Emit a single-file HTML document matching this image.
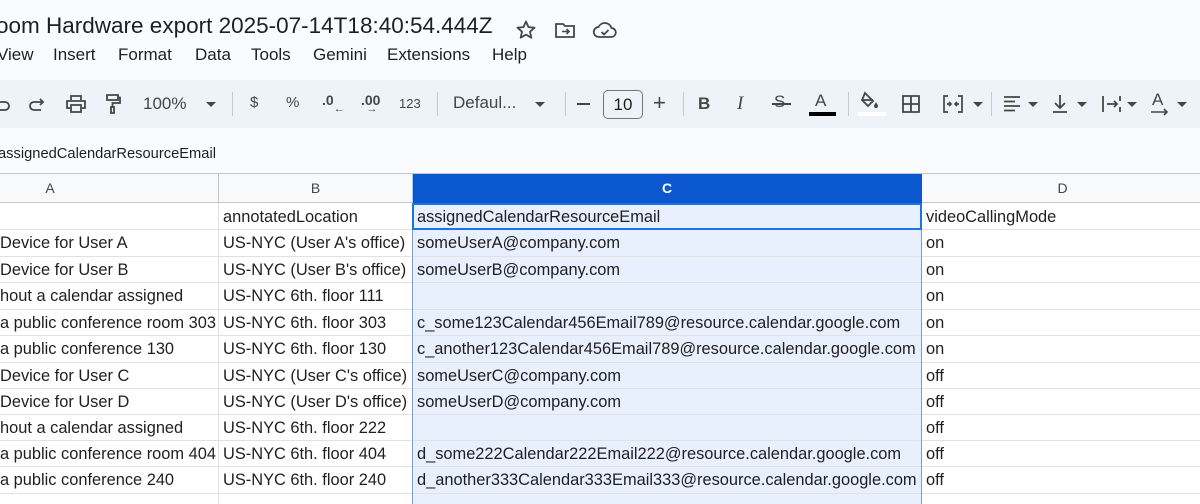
<!DOCTYPE html>
<html><head><meta charset="utf-8"><style>
*{margin:0;padding:0;box-sizing:border-box}
body{width:1200px;height:504px;overflow:hidden;background:#f9fbfd;font-family:"Liberation Sans",Arial,sans-serif;position:relative;color:#1f1f1f}
.a{position:absolute;white-space:nowrap}
.t{font-size:22.5px;top:13px;left:-4px;color:#1f1f1f}
.m{top:45px;font-size:17px;color:#1f1f1f}
.tb{position:absolute;left:-20px;top:80px;width:1240px;height:48px;background:#eef2f9;border-radius:24px}
.ic{position:absolute;top:92px;font-size:17px;color:#444746}
.sep{position:absolute;top:92px;width:1px;height:24px;background:#c7c7c7}
.dd{position:absolute;top:102px;width:0;height:0;border-left:5px solid transparent;border-right:5px solid transparent;border-top:5px solid #444746}
.grid{position:absolute;left:0;top:174px;width:1200px;height:330px;background:#fff}
.h{position:absolute;top:174px;height:29px;border-right:1px solid #c4c7c5;border-bottom:1px solid #c4c7c5;background:#f8f9fa;font-size:14px;color:#444746;text-align:center;line-height:29px}
.c{position:absolute;font-size:16.4px;color:#1f1f1f;height:26px;line-height:29px;padding-left:4px;overflow:hidden}
.hl{position:absolute;left:0;width:1200px;height:1px;background:#e1e1e1}
.vl{position:absolute;top:203px;width:1px;height:301px;background:#e1e1e1}
</style></head><body>
<div class="a t">oom Hardware export 2025-07-14T18:40:54.444Z</div>
<svg class="a" style="left:514px;top:18px" width="24" height="24" viewBox="0 0 24 24"><path d="M12 3.5l2.5 5.6 6 .6-4.5 4 1.3 6-5.3-3.1-5.3 3.1 1.3-6-4.5-4 6-.6z" fill="none" stroke="#444746" stroke-width="1.8" stroke-linejoin="round"/></svg>
<svg class="a" style="left:553px;top:18px" width="24" height="24" viewBox="0 0 24 24"><path d="M3 6h7l2 2h9v11H3z" fill="none" stroke="#444746" stroke-width="1.8"/><path d="M9 13.5h7M13.5 11l2.5 2.5-2.5 2.5" fill="none" stroke="#444746" stroke-width="1.6"/></svg>
<svg class="a" style="left:592px;top:18px" width="26" height="24" viewBox="0 0 26 24"><path d="M7 19a5 5 0 0 1-.5-10A7 7 0 0 1 19.5 10 4.5 4.5 0 0 1 19 19z" fill="none" stroke="#444746" stroke-width="1.8"/><path d="M9.5 14l2.5 2.5 4.5-4.5" fill="none" stroke="#444746" stroke-width="1.8"/></svg>
<div class="a m" style="left:-3px">View</div>
<div class="a m" style="left:53px">Insert</div>
<div class="a m" style="left:118px">Format</div>
<div class="a m" style="left:195px">Data</div>
<div class="a m" style="left:251px">Tools</div>
<div class="a m" style="left:313px">Gemini</div>
<div class="a m" style="left:387px">Extensions</div>
<div class="a m" style="left:492px">Help</div>
<div class="tb"></div>
<svg class="a" style="left:-8px;top:94px" width="20" height="20" viewBox="0 0 20 20"><path d="M4 8h9a4 4 0 0 1 0 8H6" fill="none" stroke="#444746" stroke-width="1.8"/></svg>
<svg class="a" style="left:27px;top:94px" width="20" height="20" viewBox="0 0 20 20"><path d="M16 8H7a4 4 0 0 0 0 8h7M13 5l3 3-3 3" fill="none" stroke="#444746" stroke-width="1.8"/></svg>
<svg class="a" style="left:65px;top:94px" width="22" height="20" viewBox="0 0 22 20"><path d="M6 6V2h10v4M5 14H2V7h18v7h-3M6 11h10v7H6z" fill="none" stroke="#444746" stroke-width="1.8"/></svg>
<svg class="a" style="left:103px;top:93px" width="20" height="22" viewBox="0 0 20 22"><path d="M4 2h11v5H4zM15 4.5h2V10H9.5v4M8 14h3v6H8z" fill="none" stroke="#444746" stroke-width="1.8"/></svg>
<div class="ic" style="left:143px;top:94px">100%</div>
<div class="dd" style="left:206px"></div>
<div class="sep" style="left:232px"></div>
<div class="ic" style="left:250px;top:94px;font-size:15px">$</div>
<div class="ic" style="left:286px;top:94px;font-size:15px">%</div>
<div class="ic" style="left:322px;top:92px;font-size:14px;font-weight:bold">.0<span style="font-size:11px;font-weight:normal;position:relative;top:7px">←</span></div>
<div class="ic" style="left:361px;top:92px;font-size:14px;font-weight:bold">.00<span style="font-size:11px;font-weight:normal;position:relative;top:7px;margin-left:-14px">→</span></div>
<div class="ic" style="left:399px;top:96px;font-size:13px">123</div>
<div class="sep" style="left:437px"></div>
<div class="ic" style="left:453px;top:93px">Defaul...</div>
<div class="dd" style="left:535px"></div>
<div class="sep" style="left:565px"></div>
<div class="a" style="left:577px;top:103px;width:13px;height:2px;background:#444746"></div>
<div class="a" style="left:603px;top:90px;width:40px;height:29px;border:1px solid #747775;border-radius:5px;font-size:17px;line-height:27px;text-align:center;color:#1f1f1f">10</div>
<div class="ic" style="left:653px;top:90px;font-size:22px">+</div>
<div class="sep" style="left:683px"></div>
<div class="ic" style="left:698px;top:94px;font-weight:bold">B</div>
<div class="ic" style="left:737px;top:93px;font-style:italic;font-family:'Liberation Serif',serif;font-size:19px">I</div>
<div class="ic" style="left:774px;top:92px">S</div>
<div class="a" style="left:772px;top:103px;width:19px;height:2px;background:#444746"></div>
<div class="ic" style="left:815px;top:91px">A</div>
<div class="a" style="left:809px;top:112px;width:27px;height:4px;background:#000"></div>
<div class="sep" style="left:848px"></div>
<svg class="a" style="left:859px;top:90px" width="24" height="22" viewBox="0 0 24 22"><path d="M6 3l8 8-5 5-6-6z M3 10h11" fill="none" stroke="#444746" stroke-width="1.8"/><path d="M17 12c1 2 2 3 2 4a2 2 0 0 1-4 0c0-1 1-2 2-4z" fill="#444746"/></svg>
<div class="a" style="left:858px;top:112px;width:28px;height:4px;background:#fff"></div>
<svg class="a" style="left:901px;top:94px" width="20" height="20" viewBox="0 0 20 20"><path d="M2 2h16v16H2zM10 2v16M2 10h16" fill="none" stroke="#444746" stroke-width="1.8"/></svg>
<svg class="a" style="left:942px;top:94px" width="22" height="20" viewBox="0 0 22 20"><path d="M6 2H2v16h4M16 2h4v16h-4M5 10h4M7 8l2 2-2 2M17 10h-4M15 8l-2 2 2 2" fill="none" stroke="#444746" stroke-width="1.7"/></svg>
<div class="dd" style="left:973px"></div>
<div class="sep" style="left:991px"></div>
<svg class="a" style="left:1002px;top:95px" width="20" height="18" viewBox="0 0 20 18"><path d="M2 2h16M2 6.5h11M2 11h16M2 15.5h11" stroke="#444746" stroke-width="1.8"/></svg>
<div class="dd" style="left:1028px"></div>
<svg class="a" style="left:1050px;top:93px" width="20" height="22" viewBox="0 0 20 22"><path d="M10 2v13M5 10l5 5 5-5M3 19h14" fill="none" stroke="#444746" stroke-width="1.8"/></svg>
<div class="dd" style="left:1077px"></div>
<svg class="a" style="left:1100px;top:94px" width="22" height="20" viewBox="0 0 22 20"><path d="M3 2v16M7 10h10M14 7l3 3-3 3M20 2v5M20 13v5" fill="none" stroke="#444746" stroke-width="1.8"/></svg>
<div class="dd" style="left:1127px"></div>
<div class="ic" style="left:1152px;top:90px">A</div>
<svg class="a" style="left:1150px;top:108px" width="20" height="8" viewBox="0 0 20 8"><path d="M1 4h16M14 1l3 3-3 3" fill="none" stroke="#444746" stroke-width="1.6"/></svg>
<div class="dd" style="left:1177px"></div>
<div class="a" style="left:-2px;top:146px;font-size:14.7px;color:#1f1f1f">assignedCalendarResourceEmail</div>
<div class="grid"></div>
<div class="a" style="left:0;top:173px;width:1200px;height:1px;background:#c4c7c5"></div>
<div class="h" style="left:-118px;width:337px">A</div>
<div class="h" style="left:219px;width:194px">B</div>
<div class="h" style="left:413px;width:509px;background:#0b57d0;color:#fff;font-weight:bold;border-color:#0b57d0">C</div>
<div class="h" style="left:922px;width:282px">D</div>
<div class="a" style="left:413px;top:203px;width:509px;height:301px;background:#e8effd"></div>
<div class="hl" style="top:229px"></div><div class="hl" style="top:256px"></div><div class="hl" style="top:282px"></div><div class="hl" style="top:309px"></div><div class="hl" style="top:335px"></div><div class="hl" style="top:362px"></div><div class="hl" style="top:388px"></div><div class="hl" style="top:414px"></div><div class="hl" style="top:440px"></div><div class="hl" style="top:466px"></div><div class="hl" style="top:493px"></div>
<div class="vl" style="left:218px"></div>
<div class="a" style="left:412px;top:203px;width:1px;height:301px;background:#6d9eeb"></div>
<div class="a" style="left:921px;top:203px;width:1px;height:301px;background:#6d9eeb"></div>
<div class="a" style="left:412px;top:203px;width:510px;height:27px;border:2px solid #1a73e8"></div>

<div class="c" style="left:219px;top:203px">annotatedLocation</div>
<div class="c" style="left:413px;top:203px">assignedCalendarResourceEmail</div>
<div class="c" style="left:922px;top:203px">videoCallingMode</div>

<div class="c" style="left:-4px;top:229px">Device for User A</div><div class="c" style="left:219px;top:229px">US-NYC (User A's office)</div><div class="c" style="left:413px;top:229px">someUserA@company.com</div><div class="c" style="left:922px;top:229px">on</div>
<div class="c" style="left:-4px;top:256px">Device for User B</div><div class="c" style="left:219px;top:256px">US-NYC (User B's office)</div><div class="c" style="left:413px;top:256px">someUserB@company.com</div><div class="c" style="left:922px;top:256px">on</div>
<div class="c" style="left:-4px;top:282px">hout a calendar assigned</div><div class="c" style="left:219px;top:282px">US-NYC 6th. floor 111</div><div class="c" style="left:922px;top:282px">on</div>
<div class="c" style="left:-4px;top:309px">a public conference room 303</div><div class="c" style="left:219px;top:309px">US-NYC 6th. floor 303</div><div class="c" style="left:413px;top:309px">c_some123Calendar456Email789@resource.calendar.google.com</div><div class="c" style="left:922px;top:309px">on</div>
<div class="c" style="left:-4px;top:335px">a public conference 130</div><div class="c" style="left:219px;top:335px">US-NYC 6th. floor 130</div><div class="c" style="left:413px;top:335px">c_another123Calendar456Email789@resource.calendar.google.com</div><div class="c" style="left:922px;top:335px">on</div>
<div class="c" style="left:-4px;top:362px">Device for User C</div><div class="c" style="left:219px;top:362px">US-NYC (User C's office)</div><div class="c" style="left:413px;top:362px">someUserC@company.com</div><div class="c" style="left:922px;top:362px">off</div>
<div class="c" style="left:-4px;top:388px">Device for User D</div><div class="c" style="left:219px;top:388px">US-NYC (User D's office)</div><div class="c" style="left:413px;top:388px">someUserD@company.com</div><div class="c" style="left:922px;top:388px">off</div>
<div class="c" style="left:-4px;top:414px">hout a calendar assigned</div><div class="c" style="left:219px;top:414px">US-NYC 6th. floor 222</div><div class="c" style="left:922px;top:414px">off</div>
<div class="c" style="left:-4px;top:440px">a public conference room 404</div><div class="c" style="left:219px;top:440px">US-NYC 6th. floor 404</div><div class="c" style="left:413px;top:440px">d_some222Calendar222Email222@resource.calendar.google.com</div><div class="c" style="left:922px;top:440px">off</div>
<div class="c" style="left:-4px;top:466px">a public conference 240</div><div class="c" style="left:219px;top:466px">US-NYC 6th. floor 240</div><div class="c" style="left:413px;top:466px">d_another333Calendar333Email333@resource.calendar.google.com</div><div class="c" style="left:922px;top:466px">off</div>
</body></html>
